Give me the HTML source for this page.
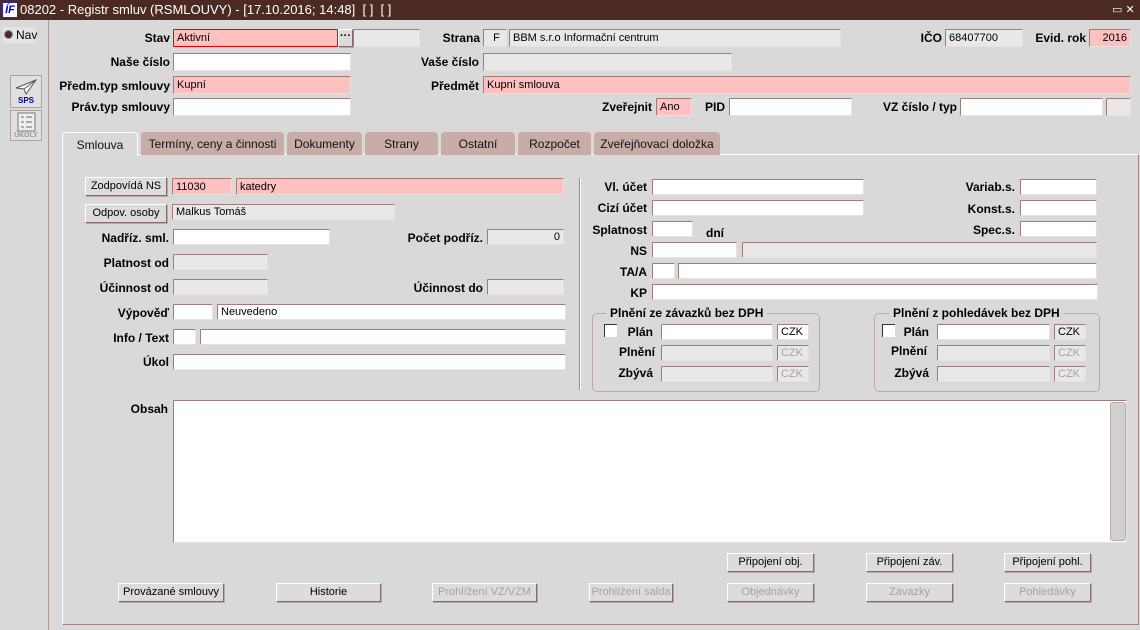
<!DOCTYPE html>
<html><head><meta charset="utf-8"><style>
*{box-sizing:border-box;margin:0;padding:0}
body{width:1140px;height:630px;background:#d9d9d9;font-family:"Liberation Sans",Arial,sans-serif;position:relative;overflow:hidden;font-size:12px;color:#000}
div,span{position:absolute}
.tb{left:0;top:0;width:1140px;height:20px;background:#4b2a22;color:#fff;font-size:13px;line-height:20px}
.l{left:0;text-align:right;font-weight:bold;font-size:12px;white-space:nowrap}
.i{height:18px;border:1px solid #b8a0a0;border-top-color:#a07c78;border-left-color:#a07c78;border-bottom-color:#e8e0e0;border-right-color:#e8e0e0;background:#fff;font-size:11px;line-height:17px;padding-left:3px;white-space:nowrap;overflow:hidden;border-radius:1px}
.p{background:#ffc0c0}
.g{background:#e8e8e8}
.b{height:19px;background:#dcdcdc;border:1px solid #fff;border-right-color:#8a6a66;border-bottom-color:#8a6a66;box-shadow:1px 1px 0 #bfa8a4;font-size:11px;text-align:center;line-height:17px;white-space:nowrap}
.d{color:#a8a0a0}
.tab{top:132px;height:23px;background:#c8aca8;border-radius:4px 4px 0 0;font-size:12px;text-align:center;line-height:24px;color:#111;white-space:nowrap}
.fs{border:1px solid #c0a8a4;border-radius:5px}
.lg{background:#d9d9d9;font-weight:bold;font-size:12px;padding:0 4px}
.cb{width:13px;height:13px;background:#fff;border-top:1px solid #333;border-left:1px solid #333}
</style></head><body>
<div class="tb"><span style="left:2px;top:2px;width:16px;height:16px;background:#fff;border:1px solid #22c;color:#00c;font-weight:bold;font-style:italic;font-size:11px;line-height:14px;text-align:center">ÍF</span><span style="left:20px;top:0">08202 - Registr smluv (RSMLOUVY) - [17.10.2016; 14:48]&nbsp; [ ]&nbsp; [ ]</span><span style="left:1112px;top:0;font-size:11px">▭ ✕</span></div>
<div style="left:48px;top:20px;width:1px;height:610px;background:#b09898"></div>
<div style="left:3px;top:27px;width:33px;height:16px;background:#e4e4e4"></div>
<div style="left:4px;top:30px;width:9px;height:9px;border-radius:50%;background:#4b2a22;border:1px solid #888"></div>
<span style="left:16px;top:28px;font-size:12px">Nav</span>
<div style="left:10px;top:75px;width:32px;height:33px;background:#e0e0e0;border:1px solid #b0a0a0;font-size:8px;color:#00a;font-weight:bold;text-align:center;padding-top:20px">SPS<svg style="position:absolute;left:3px;top:2px" width="24" height="18"><path d="M2 10 L22 2 L12 16 L10 11 Z M10 11 L22 2" fill="#fff" stroke="#555"/></svg></div>
<div style="left:10px;top:110px;width:32px;height:31px;background:#e0e0e0;border:1px solid #b0a0a0;font-size:7px;color:#999;font-weight:bold;text-align:center;padding-top:21px">ÚKOLY<svg style="position:absolute;left:6px;top:1px" width="20" height="20"><rect x="1" y="1" width="17" height="18" fill="#eee" stroke="#777"/><path d="M4 5h3M9 5h6M4 10h3M9 10h6M4 15h3M9 15h6" stroke="#666"/></svg></div>
<div class="l" style="width:170px;top:31px">Stav</div>
<div class="i p" style="left:173px;top:29px;width:165px;border:1px solid #e00">Aktivní</div>
<div class="b" style="left:338px;top:29px;width:15px;height:18px;line-height:12px;font-weight:bold">···</div>
<div class="i g" style="left:353px;top:29px;width:67px"></div>
<div class="l" style="width:480px;top:31px">Strana</div>
<div class="i g" style="left:483px;top:29px;width:24px;text-align:center">F</div>
<div class="i g" style="left:509px;top:29px;width:332px">BBM s.r.o Informační centrum</div>
<div class="l" style="width:942px;top:31px">IČO</div>
<div class="i g" style="left:945px;top:29px;width:78px">68407700</div>
<div class="l" style="width:1086px;top:31px">Evid. rok</div>
<div class="i p" style="left:1089px;top:29px;width:42px;text-align:right;padding-right:3px">2016</div>
<div class="l" style="width:170px;top:55px">Naše číslo</div>
<div class="i" style="left:173px;top:53px;width:178px"></div>
<div class="l" style="width:479px;top:55px">Vaše číslo</div>
<div class="i g" style="left:483px;top:53px;width:249px"></div>
<div class="l" style="width:170px;top:79px">Předm.typ smlouvy</div>
<div class="i p" style="left:173px;top:76px;width:178px">Kupní</div>
<div class="l" style="width:479px;top:79px">Předmět</div>
<div class="i p" style="left:483px;top:76px;width:648px">Kupní smlouva</div>
<div class="l" style="width:170px;top:100px">Práv.typ smlouvy</div>
<div class="i" style="left:173px;top:98px;width:178px"></div>
<div class="l" style="width:652px;top:100px">Zveřejnit</div>
<div class="i p" style="left:656px;top:98px;width:36px">Ano</div>
<div class="l" style="width:725px;top:100px">PID</div>
<div class="i" style="left:729px;top:98px;width:123px"></div>
<div class="l" style="width:957px;top:100px">VZ číslo / typ</div>
<div class="i" style="left:960px;top:98px;width:143px"></div>
<div class="i g" style="left:1106px;top:98px;width:25px"></div>
<div style="left:62px;top:154px;width:1077px;height:471px;border:1px solid #fff;border-right-color:#a08880;border-bottom-color:#a08880;background:#d9d9d9"></div>
<div class="tab" style="left:62px;width:76px;height:24px;background:#d9d9d9;border:1px solid #fff;border-bottom:none">Smlouva</div>
<div class="tab" style="left:141px;width:143px">Termíny, ceny a činnosti</div>
<div class="tab" style="left:287px;width:75px">Dokumenty</div>
<div class="tab" style="left:365px;width:73px">Strany</div>
<div class="tab" style="left:441px;width:74px">Ostatní</div>
<div class="tab" style="left:518px;width:73px">Rozpočet</div>
<div class="tab" style="left:594px;width:126px">Zveřejňovací doložka</div>
<div class="b" style="left:85px;top:177px;width:82px">Zodpovídá NS</div>
<div class="i p" style="left:172px;top:178px;width:60px;height:17px;line-height:16px">11030</div>
<div class="i p" style="left:236px;top:178px;width:328px;height:17px;line-height:16px">katedry</div>
<div class="b" style="left:85px;top:204px;width:82px">Odpov. osoby</div>
<div class="i g" style="left:172px;top:204px;width:223px;height:16px;line-height:14px">Malkus Tomáš</div>
<div class="l" style="width:169px;top:231px">Nadříz. sml.</div>
<div class="i" style="left:173px;top:229px;width:157px;height:16px"></div>
<div class="l" style="width:483px;top:231px">Počet podříz.</div>
<div class="i g" style="left:487px;top:229px;width:77px;height:16px;text-align:right;padding-right:3px;line-height:14px">0</div>
<div class="l" style="width:169px;top:256px">Platnost od</div>
<div class="i g" style="left:173px;top:254px;width:95px;height:16px"></div>
<div class="l" style="width:169px;top:281px">Účinnost od</div>
<div class="i g" style="left:173px;top:279px;width:95px;height:16px"></div>
<div class="l" style="width:483px;top:281px">Účinnost do</div>
<div class="i g" style="left:487px;top:279px;width:77px;height:16px"></div>
<div class="l" style="width:169px;top:306px">Výpověď</div>
<div class="i" style="left:173px;top:304px;width:40px;height:16px"></div>
<div class="i" style="left:217px;top:304px;width:349px;height:16px;line-height:14px">Neuvedeno</div>
<div class="l" style="width:169px;top:331px">Info / Text</div>
<div class="i" style="left:173px;top:329px;width:23px;height:16px"></div>
<div class="i" style="left:200px;top:329px;width:366px;height:16px"></div>
<div class="l" style="width:169px;top:355px">Úkol</div>
<div class="i" style="left:173px;top:354px;width:393px;height:16px"></div>
<div style="left:579px;top:178px;width:2px;height:212px;border-left:1px solid #a08880;border-right:1px solid #fff"></div>
<div class="l" style="width:647px;top:180px">Vl. účet</div>
<div class="i" style="left:652px;top:179px;width:212px;height:16px"></div>
<div class="l" style="width:1015px;top:180px">Variab.s.</div>
<div class="i" style="left:1020px;top:179px;width:77px;height:16px"></div>
<div class="l" style="width:647px;top:201px">Cizí účet</div>
<div class="i" style="left:652px;top:200px;width:212px;height:16px"></div>
<div class="l" style="width:1015px;top:202px">Konst.s.</div>
<div class="i" style="left:1020px;top:200px;width:77px;height:16px"></div>
<div class="l" style="width:647px;top:223px">Splatnost</div>
<div class="i" style="left:652px;top:221px;width:41px;height:16px"></div>
<span style="left:706px;top:226px;font-weight:bold">dní</span>
<div class="l" style="width:1015px;top:223px">Spec.s.</div>
<div class="i" style="left:1020px;top:221px;width:77px;height:16px"></div>
<div class="l" style="width:647px;top:244px">NS</div>
<div class="i" style="left:652px;top:242px;width:85px;height:16px"></div>
<div class="i g" style="left:742px;top:242px;width:355px;height:16px"></div>
<div class="l" style="width:647px;top:265px">TA/A</div>
<div class="i" style="left:652px;top:263px;width:23px;height:16px"></div>
<div class="i" style="left:678px;top:263px;width:419px;height:16px"></div>
<div class="l" style="width:647px;top:286px">KP</div>
<div class="i" style="left:652px;top:284px;width:446px;height:16px"></div>
<div class="fs" style="left:592px;top:313px;width:228px;height:79px"></div>
<span class="lg" style="left:606px;top:306px">Plnění ze závazků bez DPH</span>
<div class="cb" style="left:604px;top:324px"></div>
<div class="l" style="width:653px;top:325px">Plán</div>
<div class="i" style="left:661px;top:324px;width:112px;height:16px"></div>
<div class="i" style="left:777px;top:324px;width:32px;height:16px;line-height:14px">CZK</div>
<div class="l" style="width:655px;top:345px">Plnění</div>
<div class="i g" style="left:661px;top:345px;width:112px;height:16px"></div>
<div class="i g d" style="left:777px;top:345px;width:32px;height:16px;line-height:14px">CZK</div>
<div class="l" style="width:653px;top:366px">Zbývá</div>
<div class="i g" style="left:661px;top:366px;width:112px;height:16px"></div>
<div class="i g d" style="left:777px;top:366px;width:32px;height:16px;line-height:14px">CZK</div>
<div class="fs" style="left:874px;top:313px;width:226px;height:79px"></div>
<span class="lg" style="left:889px;top:306px">Plnění z pohledávek bez DPH</span>
<div class="cb" style="left:882px;top:324px"></div>
<div class="l" style="width:929px;top:325px">Plán</div>
<div class="i" style="left:937px;top:324px;width:113px;height:16px"></div>
<div class="i g" style="left:1054px;top:324px;width:32px;height:16px;line-height:14px">CZK</div>
<div class="l" style="width:927px;top:344px">Plnění</div>
<div class="i g" style="left:937px;top:345px;width:113px;height:16px"></div>
<div class="i g d" style="left:1054px;top:345px;width:32px;height:16px;line-height:14px">CZK</div>
<div class="l" style="width:929px;top:366px">Zbývá</div>
<div class="i g" style="left:937px;top:366px;width:113px;height:16px"></div>
<div class="i g d" style="left:1054px;top:366px;width:32px;height:16px;line-height:14px">CZK</div>
<div class="l" style="width:168px;top:402px">Obsah</div>
<div class="i" style="left:173px;top:400px;width:954px;height:143px"></div>
<div style="left:1110px;top:402px;width:16px;height:139px;background:#d0d0d0;border:1px solid #c0a8a4;border-radius:3px"></div>
<div class="b" style="left:727px;top:553px;width:87px">Připojení obj.</div>
<div class="b" style="left:866px;top:553px;width:87px">Připojení záv.</div>
<div class="b" style="left:1004px;top:553px;width:87px">Připojení pohl.</div>
<div class="b" style="left:118px;top:583px;width:106px">Provázané smlouvy</div>
<div class="b" style="left:276px;top:583px;width:105px">Historie</div>
<div class="b d" style="left:432px;top:583px;width:105px">Prohlížení VZ/VZM</div>
<div class="b d" style="left:589px;top:583px;width:84px">Prohlížení salda</div>
<div class="b d" style="left:727px;top:583px;width:87px">Objednávky</div>
<div class="b d" style="left:866px;top:583px;width:87px">Závazky</div>
<div class="b d" style="left:1004px;top:583px;width:87px">Pohledávky</div>
</body></html>
